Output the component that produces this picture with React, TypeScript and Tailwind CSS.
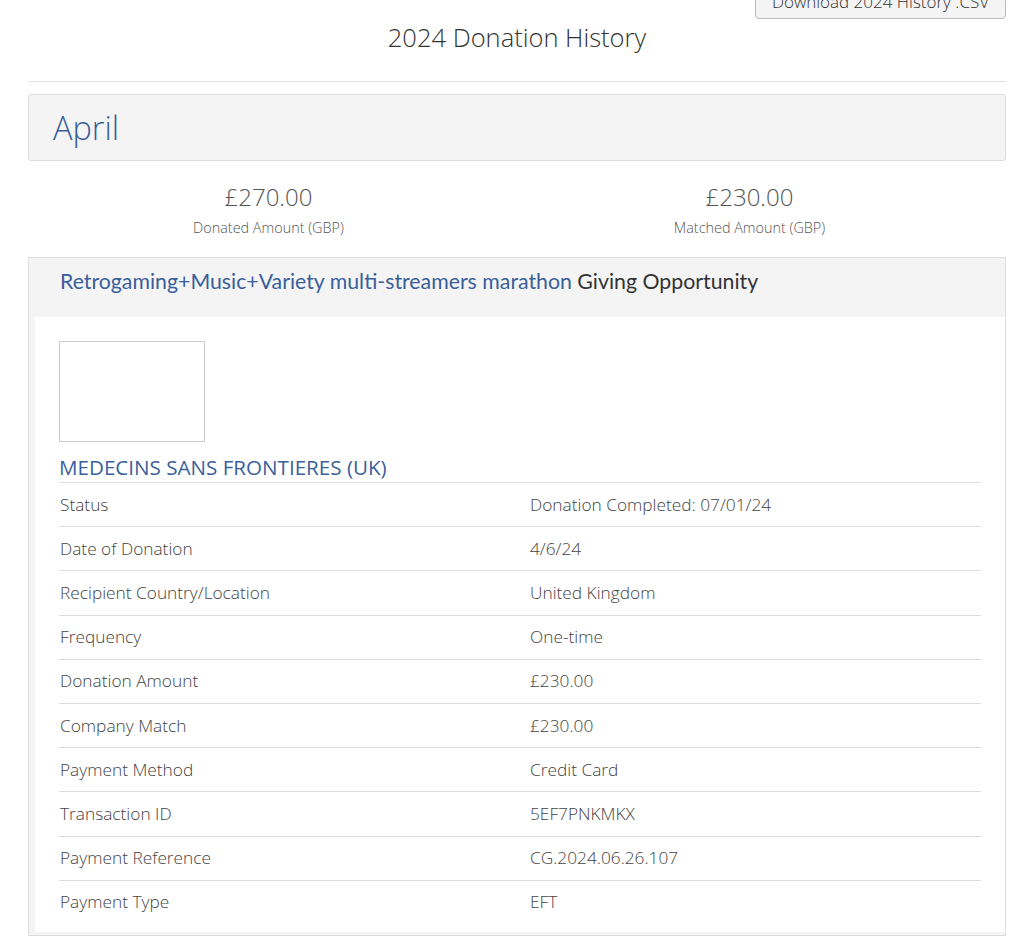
const rows: [string, string][] = [
  ["Status", "Donation Completed: 07/01/24"],
  ["Date of Donation", "4/6/24"],
  ["Recipient Country/Location", "United Kingdom"],
  ["Frequency", "One-time"],
  ["Donation Amount", "£230.00"],
  ["Company Match", "£230.00"],
  ["Payment Method", "Credit Card"],
  ["Transaction ID", "5EF7PNKMKX"],
  ["Payment Reference", "CG.2024.06.26.107"],
  ["Payment Type", "EFT"],
];

function Stat({ amount, label }: { amount: string; label: string }) {
  return (
    <div className="flex flex-col items-center">
      <div className="text-[24px] leading-[30px] font-light text-[#555]">{amount}</div>
      <div className="mt-[6px] text-[14.4px] leading-[20px] font-light text-[#555]">{label}</div>
    </div>
  );
}

export default function App() {
  return (
    <div className="min-h-[936px] bg-white font-['Open_Sans',sans-serif] overflow-hidden">
      <div className="ml-[28px] w-[978px]">
        <div className="flex justify-end">
          <button className="-mt-[15px] h-[34px] w-[251px] rounded-[4px] border border-[#bbb] bg-[#f4f4f4] text-[17px] font-light text-[#333]">
            Download 2024 History .CSV
          </button>
        </div>

        <h1 className="mt-0 text-center text-[25.5px] leading-[36px] font-light text-[#333]">
          2024 Donation History
        </h1>

        <hr className="mt-[26px] border-t border-[#e2e2e2]" />

        <div className="mt-[12px] h-[67px] rounded-[3px] border border-[#ddd] bg-[#f4f4f4] pl-[24px] flex items-center">
          <h2 className="text-[32.5px] leading-[40px] font-light text-[#3a5f9b]">April</h2>
        </div>

        <div className="mt-[21px] grid grid-cols-2 pr-[16px]">
          <Stat amount="£270.00" label="Donated Amount (GBP)" />
          <Stat amount="£230.00" label="Matched Amount (GBP)" />
        </div>

        <div className="mt-[19px] border border-[#ddd] bg-[#f4f4f4]">
          <div className="h-[59px] pl-[31px] pt-[8px] font-['Lato',sans-serif] text-[21.3px] leading-[30px]">
            <span className="text-[#3a5f9b]">Retrogaming+Music+Variety multi-streamers marathon</span>{" "}
            <span className="text-[#333]">Giving Opportunity</span>
          </div>
          <div className="ml-[6px] mb-[3px] bg-white px-[24px] pt-[24px] pb-[8px]">
            <div className="h-[101px] w-[146px] border border-[#ccc] bg-white" />
            <div className="mt-[11px] text-[20.6px] leading-[28px] text-[#3a5f9b]">
              MEDECINS SANS FRONTIERES (UK)
            </div>
            <div className="mt-[1px]">
              {rows.map(([label, value]) => (
                <div
                  key={label}
                  className="grid h-[44.2px] grid-cols-[470px_1fr] items-center border-t border-[#ddd] pl-px text-[17.3px] font-light text-[#444]"
                >
                  <div>{label}</div>
                  <div>{value}</div>
                </div>
              ))}
            </div>
          </div>
        </div>
      </div>
    </div>
  );
}
